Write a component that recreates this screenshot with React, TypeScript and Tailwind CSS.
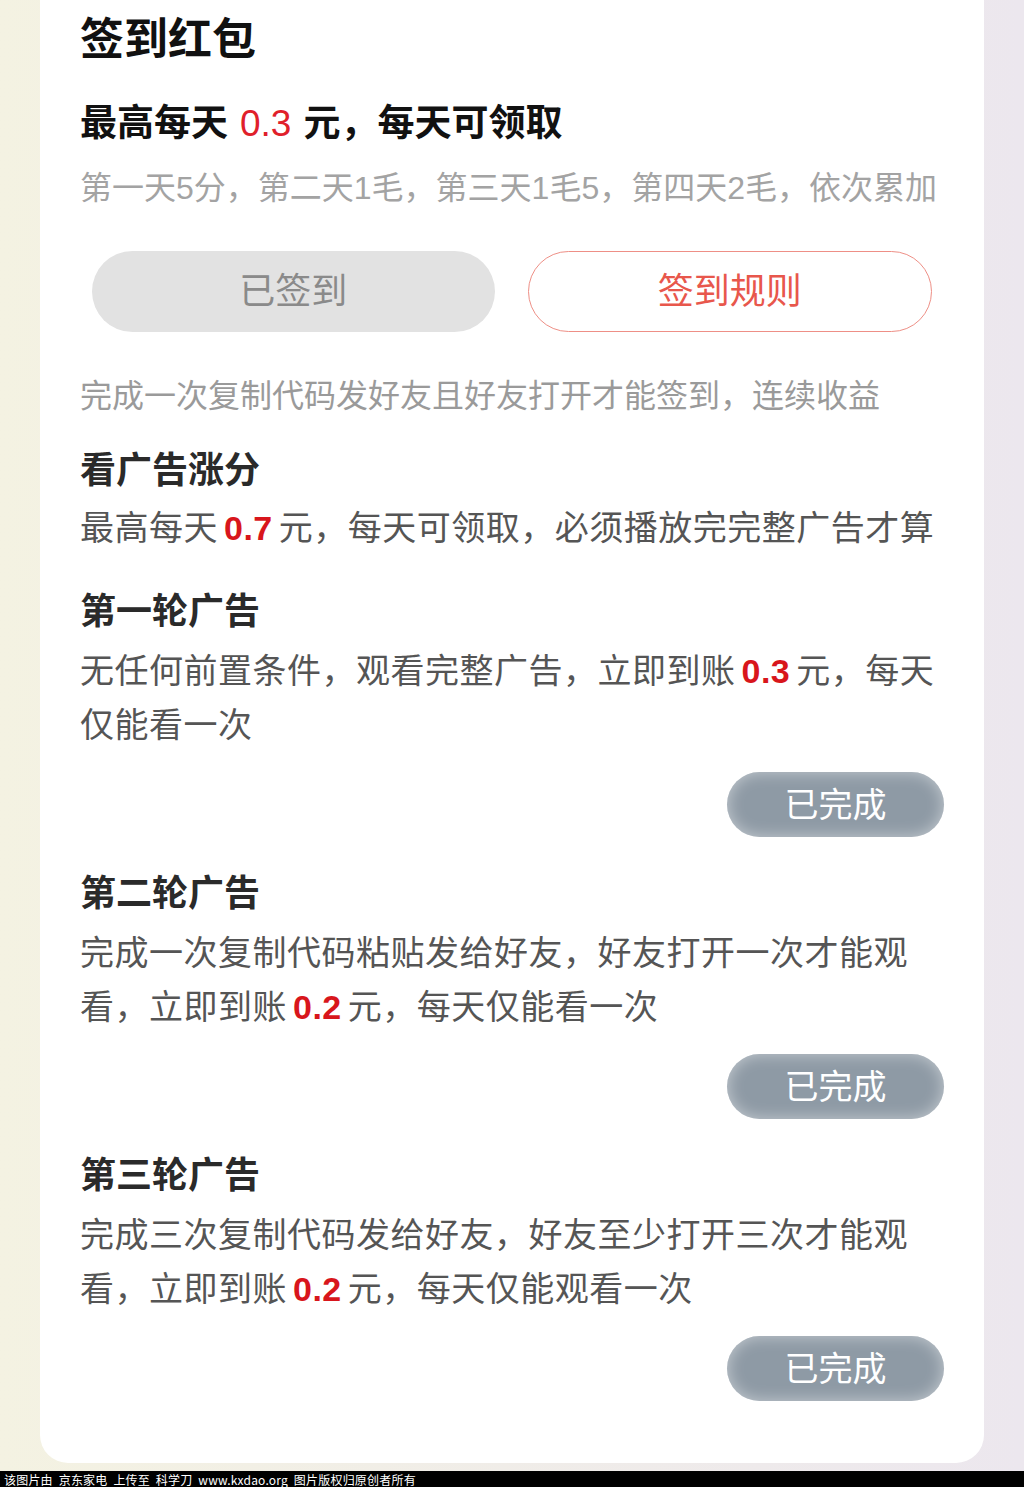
const CJK = { fontFamily: '"Liberation Sans", "Noto Sans CJK SC", sans-serif' };

function DoneButton() {
  return (
    <div className="mt-5 flex justify-end">
      <div className="flex h-[65px] w-[217px] items-center justify-center rounded-full bg-[#8e9aa5] text-[34px] leading-none text-white shadow-[inset_0_0_16px_rgba(255,255,255,0.5)]">
        已完成
      </div>
    </div>
  );
}

function AdRound({ title, children }: { title: string; children: React.ReactNode }) {
  return (
    <section className="mt-[39px]">
      <h2 className="text-[36px] font-bold leading-[36px] text-[#2a2a2a]">{title}</h2>
      <p className="mt-[14px] pr-[6px] text-[34px] leading-[54px] tracking-[0.5px] text-[#555]">{children}</p>
      <DoneButton />
    </section>
  );
}

function Money({ v }: { v: string }) {
  return <span className="mx-[6px] font-bold text-[#d8161c]">{v}</span>;
}

export default function App() {
  return (
    <div className="flex h-[1487px] w-[1024px] flex-col overflow-hidden" style={CJK}>
      <div className="flex-1 bg-gradient-to-r from-[#f4f2e2] to-[#ece7ee] px-10 pb-2">
        <div className="rounded-b-[28px] bg-white px-10 pt-[18px] pb-[62px]">
          <h1 className="text-[44px] font-bold leading-[44px] text-[#111]">签到红包</h1>
          <p className="mt-[43px] text-[37px] font-bold leading-[37px] text-[#111]">
            最高每天<span className="mx-[12px] font-normal text-[#e0202a]">0.3</span>元，每天可领取
          </p>
          <p className="mt-[30px] text-[32px] leading-[32px] text-[#a3a3a3]">
            第一天5分，第二天1毛，第三天1毛5，第四天2毛，依次累加
          </p>
          <div className="mt-[47px] flex gap-[33px] px-3">
            <div className="flex h-[81px] flex-1 items-center justify-center rounded-full bg-[#e2e2e2] text-[36px] text-[#8a8a8a]">
              已签到
            </div>
            <div className="flex h-[81px] flex-1 items-center justify-center rounded-full border-[1.5px] border-[#ee8f86] text-[36px] text-[#e8574c]">
              签到规则
            </div>
          </div>
          <p className="mt-[48px] text-[32px] leading-[32px] text-[#9a9a9a]">
            完成一次复制代码发好友且好友打开才能签到，连续收益
          </p>
          <h2 className="mt-[41px] text-[36px] font-bold leading-[36px] text-[#2a2a2a]">看广告涨分</h2>
          <p className="mt-[22px] whitespace-nowrap text-[34px] leading-[34px] tracking-[0.5px] text-[#555]">
            最高每天<Money v="0.7" />元，每天可领取，必须播放完完整广告才算
          </p>
          <div className="mt-[10px] flex flex-col">
            <AdRound title="第一轮广告">
              无任何前置条件，观看完整广告，立即到账<Money v="0.3" />元，每天仅能看一次
            </AdRound>
            <AdRound title="第二轮广告">
              完成一次复制代码粘贴发给好友，好友打开一次才能观看，立即到账<Money v="0.2" />元，每天仅能看一次
            </AdRound>
            <AdRound title="第三轮广告">
              完成三次复制代码发给好友，好友至少打开三次才能观看，立即到账<Money v="0.2" />元，每天仅能观看一次
            </AdRound>
          </div>
        </div>
      </div>
      <div className="flex h-[17px] shrink-0 items-center bg-black pl-1 text-[12px] leading-none tracking-[0.2px] text-white [word-spacing:3px]" style={{ fontFamily: '"Noto Sans CJK SC", sans-serif' }}>
        该图片由 京东家电 上传至 科学刀 www.kxdao.org 图片版权归原创者所有
      </div>
    </div>
  );
}
